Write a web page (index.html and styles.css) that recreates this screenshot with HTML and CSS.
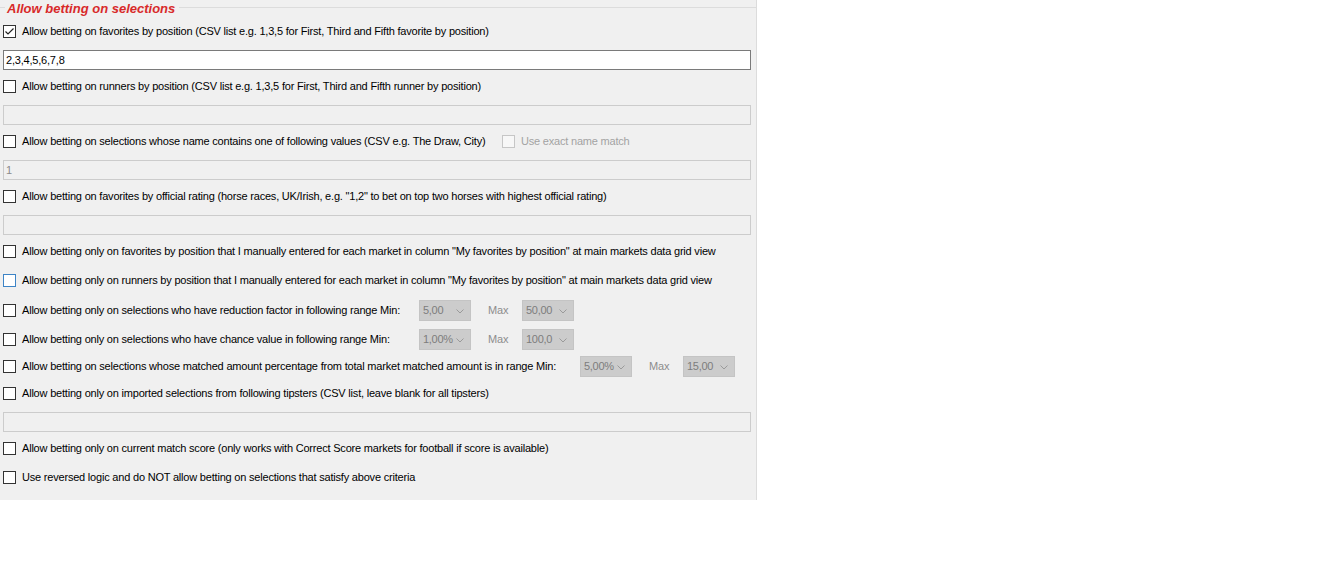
FILE: index.html
```html
<!DOCTYPE html>
<html>
<head>
<meta charset="utf-8">
<title>Allow betting on selections</title>
<link rel="stylesheet" href="styles.css">
</head>
<body>
<div class="panel">
  <div class="group-head">
    <span class="head-line head-line-left"></span>
    <span class="group-title">Allow betting on selections</span>
    <span class="head-line head-line-right"></span>
  </div>

  <div class="row first">
    <span class="cb checked"><svg viewBox="0 0 13 13" width="13" height="13"><path d="M2.5 6.5 L5 9 L10.5 3.5" fill="none" stroke="#222" stroke-width="1.2"/></svg></span>
    <span class="label">Allow betting on favorites by position (CSV list e.g. 1,3,5 for First, Third and Fifth favorite by position)</span>
  </div>
  <div class="tb">2,3,4,5,6,7,8</div>

  <div class="row after-tb">
    <span class="cb"></span>
    <span class="label">Allow betting on runners by position (CSV list e.g. 1,3,5 for First, Third and Fifth runner by position)</span>
  </div>
  <div class="tb disabled"></div>

  <div class="row after-tb">
    <span class="cb"></span>
    <span class="label w-name">Allow betting on selections whose name contains one of following values (CSV e.g. The Draw, City)</span>
    <span class="cb cb-disabled"></span>
    <span class="label muted">Use exact name match</span>
  </div>
  <div class="tb disabled">1</div>

  <div class="row after-tb">
    <span class="cb"></span>
    <span class="label">Allow betting on favorites by official rating (horse races, UK/Irish, e.g. "1,2" to bet on top two horses with highest official rating)</span>
  </div>
  <div class="tb disabled"></div>

  <div class="row after-tb">
    <span class="cb"></span>
    <span class="label">Allow betting only on favorites by position that I manually entered for each market in column "My favorites by position" at main markets data grid view</span>
  </div>

  <div class="row">
    <span class="cb focus"></span>
    <span class="label">Allow betting only on runners by position that I manually entered for each market in column "My favorites by position" at main markets data grid view</span>
  </div>

  <div class="row gap10">
    <span class="cb"></span>
    <span class="label w-range">Allow betting only on selections who have reduction factor in following range Min:</span>
    <span class="combo"><span class="combo-text">5,00</span><svg class="chev" viewBox="0 0 8 5" width="8" height="5"><path d="M0.5 0.5 L4 4 L7.5 0.5" fill="none" stroke="#9a9a9a" stroke-width="1"/></svg></span>
    <span class="max">Max</span>
    <span class="combo"><span class="combo-text">50,00</span><svg class="chev" viewBox="0 0 8 5" width="8" height="5"><path d="M0.5 0.5 L4 4 L7.5 0.5" fill="none" stroke="#9a9a9a" stroke-width="1"/></svg></span>
  </div>

  <div class="row">
    <span class="cb"></span>
    <span class="label w-range">Allow betting only on selections who have chance value in following range Min:</span>
    <span class="combo"><span class="combo-text">1,00%</span><svg class="chev" viewBox="0 0 8 5" width="8" height="5"><path d="M0.5 0.5 L4 4 L7.5 0.5" fill="none" stroke="#9a9a9a" stroke-width="1"/></svg></span>
    <span class="max">Max</span>
    <span class="combo"><span class="combo-text">100,0</span><svg class="chev" viewBox="0 0 8 5" width="8" height="5"><path d="M0.5 0.5 L4 4 L7.5 0.5" fill="none" stroke="#9a9a9a" stroke-width="1"/></svg></span>
  </div>

  <div class="row gap7">
    <span class="cb"></span>
    <span class="label w-matched">Allow betting on selections whose matched amount percentage from total market matched amount is in range Min:</span>
    <span class="combo"><span class="combo-text">5,00%</span><svg class="chev" viewBox="0 0 8 5" width="8" height="5"><path d="M0.5 0.5 L4 4 L7.5 0.5" fill="none" stroke="#9a9a9a" stroke-width="1"/></svg></span>
    <span class="max">Max</span>
    <span class="combo"><span class="combo-text">15,00</span><svg class="chev" viewBox="0 0 8 5" width="8" height="5"><path d="M0.5 0.5 L4 4 L7.5 0.5" fill="none" stroke="#9a9a9a" stroke-width="1"/></svg></span>
  </div>

  <div class="row gap7">
    <span class="cb"></span>
    <span class="label">Allow betting only on imported selections from following tipsters (CSV list, leave blank for all tipsters)</span>
  </div>
  <div class="tb disabled"></div>

  <div class="row after-tb">
    <span class="cb"></span>
    <span class="label">Allow betting only on current match score (only works with Correct Score markets for football if score is available)</span>
  </div>

  <div class="row">
    <span class="cb"></span>
    <span class="label">Use reversed logic and do NOT allow betting on selections that satisfy above criteria</span>
  </div>
</div>
</body>
</html>
```
FILE: styles.css
```css
html, body {
  margin: 0;
  padding: 0;
  background: #ffffff;
}

body {
  font-family: "Liberation Sans", Arial, sans-serif;
  font-size: 11px;
  color: #000;
}

.panel {
  width: 756px;
  height: 500px;
  background: #f0f0f0;
  border-right: 1px solid #dcdcdc;
  display: flex;
  flex-direction: column;
  overflow: hidden;
}

.group-head {
  display: flex;
  align-items: flex-start;
  height: 16px;
}

.head-line {
  margin-top: 7px;
  border-top: 1px solid #dcdcdc;
  height: 0;
}

.head-line-left {
  width: 5px;
}

.head-line-right {
  flex: 1;
}

.group-title {
  font-size: 13px;
  line-height: 16px;
  font-weight: bold;
  font-style: italic;
  color: #d82a2a;
  padding: 1px 4px 0 2px;
}

.row {
  display: flex;
  align-items: center;
  height: 20px;
  padding-left: 3px;
  margin-top: 9px;
  white-space: nowrap;
}

.row.first {
  margin-top: 5px;
}

.row.after-tb {
  margin-top: 6px;
}

.row.gap10 {
  margin-top: 10px;
}

.row.gap7 {
  margin-top: 7px;
}

.cb {
  flex: none;
  width: 13px;
  height: 13px;
  box-sizing: border-box;
  border: 1px solid #333333;
  background: #ffffff;
  margin-right: 6px;
  position: relative;
}

.cb svg {
  position: absolute;
  left: -1px;
  top: -1px;
}

.cb.focus {
  border-color: #3d84c6;
}

.cb.cb-disabled {
  border-color: #c6c6c6;
  background: #f7f7f7;
}

.label {
  letter-spacing: -0.2px;
  line-height: 20px;
}

.label.w-name {
  width: 480px;
  flex: none;
}

.label.w-range {
  width: 397px;
  flex: none;
}

.label.w-matched {
  width: 558px;
  flex: none;
}

.muted {
  color: #a3a3a3;
}

.tb {
  margin: 9px 0 0 3px;
  width: 748px;
  height: 20px;
  box-sizing: border-box;
  border: 1px solid #7a7a7a;
  background: #ffffff;
  padding: 0 2px;
  line-height: 18px;
  letter-spacing: -0.2px;
}

.tb.disabled {
  border-color: #cccccc;
  background: #f0f0f0;
  color: #8a8a8a;
}

.combo {
  flex: none;
  width: 52px;
  height: 21px;
  box-sizing: border-box;
  border: 1px solid #c4c4c4;
  background: #cccccc;
  display: flex;
  align-items: center;
  position: relative;
}

.combo-text {
  padding-left: 3px;
  color: #7d7d7d;
  letter-spacing: -0.3px;
}

.chev {
  position: absolute;
  right: 6px;
  top: 8px;
}

.max {
  flex: none;
  width: 34px;
  margin-left: 17px;
  color: #8d8d8d;
  letter-spacing: -0.2px;
}
```
